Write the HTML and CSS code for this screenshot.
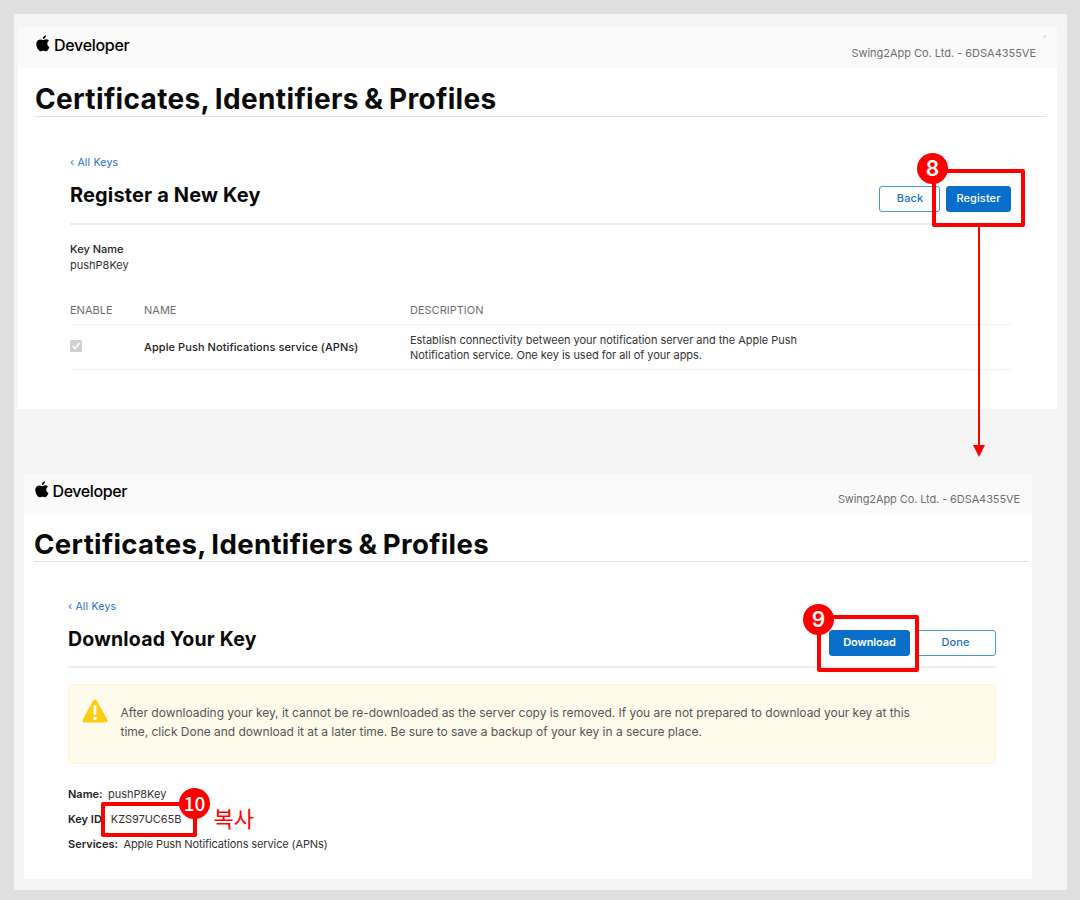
FILE: index.html
```html
<!DOCTYPE html>
<html lang="ko">
<head>
<meta charset="utf-8">
<title>Certificates, Identifiers &amp; Profiles</title>
<link rel="stylesheet" href="styles.css">
</head>
<body>
<svg width="0" height="0" class="defs"><symbol id="apple" viewBox="0 0 14 17"><path d="M9.9 0.2C10 1.3 9.6 2.3 8.9 3.1 8.3 3.8 7.5 4.2 6.8 4.1 6.7 3.1 7.1 2.2 7.7 1.5 8.3.8 9.2.3 9.9.2ZM12.9 5.7C11.8 6.4 11.3 7.4 11.3 8.7 11.3 10.3 12.2 11.4 13.4 11.9 13 13.3 12.3 14.5 11.4 15.5 10.8 16.2 10.2 16.4 9.5 16.2L8.1 15.8C7.4 15.6 6.8 15.7 6.1 15.9L5 16.2C4.1 16.5 3.4 16 2.8 15.3.9 13.2.2 10.800.3 8.700.4 6.300 1.800 4.500 4 4.400 5.200 4.300 6.100 5.100 7 5.100 7.900 5.100 8.900 4.300 10.200 4.300 11.300 4.300 12.300 4.900 12.900 5.700Z"/></symbol></svg>
<main class="canvas">
  <section class="panel panel-register">
    <header class="bar">
      <div class="brand"><svg class="apple"><use href="#apple"/></svg><span>Developer</span></div>
      <span class="team">Swing2App Co. Ltd. - 6DSA4355VE</span>
    </header>
    <h1 class="title">Certificates, Identifiers &amp; Profiles</h1>
    <div class="content">
      <a class="back-link">‹ All Keys</a>
      <div class="toolbar">
        <h2>Register a New Key</h2>
        <div class="actions"><span class="btn btn-back">Back</span><span class="btn primary btn-register">Register</span></div>
      </div>
      <div class="keyname"><b>Key Name</b><span>pushP8Key</span></div>
      <div class="grid grid-head"><span>ENABLE</span><span>NAME</span><span>DESCRIPTION</span></div>
      <div class="grid grid-row">
        <svg class="check" viewBox="0 0 12 12"><rect width="12" height="12" rx="1.500" fill="#d0d0d0"/><path d="M2.600 6.300 4.900 8.700 9.500 2.900" fill="none" stroke="#fff" stroke-width="1.600"/></svg>
        <span class="service">Apple Push Notifications service (APNs)</span>
        <span class="desc">Establish connectivity between your notification server and the Apple Push<br>Notification service. One key is used for all of your apps.</span>
      </div>
    </div>
  </section>

  <section class="panel panel-download">
    <header class="bar">
      <div class="brand"><svg class="apple"><use href="#apple"/></svg><span>Developer</span></div>
      <span class="team">Swing2App Co. Ltd. - 6DSA4355VE</span>
    </header>
    <h1 class="title">Certificates, Identifiers &amp; Profiles</h1>
    <div class="content">
      <a class="back-link">‹ All Keys</a>
      <div class="toolbar">
        <h2>Download Your Key</h2>
        <div class="actions"><span class="btn primary btn-download">Download</span><span class="btn btn-done">Done</span></div>
      </div>
      <div class="alert">
        <svg class="warn" viewBox="0 0 26 24"><path d="M13 2.500 23.500 21.500H2.500Z" fill="#ffcc14" stroke="#ffcc14" stroke-width="4" stroke-linejoin="round"/><path d="M13 7.500v7" stroke="#fff" stroke-width="2.800" stroke-linecap="round"/><circle cx="13" cy="19.500" r="1.700" fill="#fff"/></svg>
        <p>After downloading your key, it cannot be re-downloaded as the server copy is removed. If you are not prepared to download your key at this<br>time, click Done and download it at a later time. Be sure to save a backup of your key in a secure place.</p>
      </div>
      <dl class="facts">
        <div><dt>Name:</dt><dd>pushP8Key</dd></div>
        <div><dt>Key ID:</dt><dd>KZS97UC65B</dd></div>
        <div><dt>Services:</dt><dd class="services">Apple Push Notifications service (APNs)</dd></div>
      </dl>
    </div>
  </section>
</main>

<i class="speck"></i>
<div class="frame frame-8"></div><div class="step step-8">8</div>
<svg class="arrow" viewBox="0 0 12 230"><path d="M6 0V220" stroke="#f00" stroke-width="2"/><path d="M0 218H12L6 230Z" fill="#f00"/></svg>
<div class="frame frame-9"></div><div class="step step-9">9</div>
<div class="frame frame-10"></div><div class="step step-10">10</div>
<div class="copy-note">복사</div>
</body>
</html>
```
FILE: styles.css
```css
* { box-sizing: border-box; }
body { margin: 0; width: 1080px; height: 900px; position: relative; overflow: hidden; background: #e0e0e0; padding: 14px 13px 10px 14px; font-family: Inter, "Noto Sans CJK KR", sans-serif; color: #333; font-size: 11px; }
.defs { position: absolute; }
.canvas { height: 876px; background: #f5f5f5; padding-top: 13px; }
.panel { background: #fff; }
.panel-register { width: 1039px; height: 382px; margin-left: 4px; }
.panel-download { width: 1008px; height: 405px; margin: 65px 0 0 10px; }
.bar { height: 41px; background: #fafafa; display: flex; justify-content: space-between; padding: 8px 21px 0 18px; }
.panel-download .bar { height: 39px; padding: 7px 12px 0 11px; }
.brand { display: flex; gap: 4px; height: 20px; color: #000; font-size: 16px; line-height: 20px; font-weight: 500; letter-spacing: -0.3px; }
.panel-download .brand { letter-spacing: -0.4px; gap: 3.500px; }
.apple { width: 14px; height: 17px; }
.team { font-size: 11px; line-height: 14px; margin-top: 11px; color: #6e6e6e; letter-spacing: -0.020px; }
.panel-download .team { letter-spacing: -0.100px; }
.title { margin: 0 11px 0 17px; height: 49px; border-bottom: 1px solid #e2e2e2; font-size: 28px; line-height: 34px; padding-top: 14px; font-weight: 700; color: #0a0a0a; letter-spacing: 0.340px; word-spacing: -1.500px; white-space: nowrap; }
.panel-download .title { margin: 0 3px 0 10px; font-size: 27.600px; }
.content { padding: 38px 45px 0 52px; }
.panel-download .content { padding: 37px 36px 0 44px; }
.back-link { display: block; height: 16px; line-height: 16px; color: #1b70cb; font-size: 10.500px; letter-spacing: 0.200px; }
.toolbar { height: 54px; display: flex; justify-content: space-between; border-bottom: 2px solid #ececec; padding-top: 11px; }
.panel-download .toolbar { height: 53px; }
h2 { margin: 0; font-size: 20px; line-height: 27px; font-weight: 700; color: #0a0a0a; letter-spacing: 0.140px; white-space: nowrap; }
.panel-download h2 { font-size: 19.500px; letter-spacing: 0.200px; }
.actions { display: flex; padding-top: 4px; }
.btn { height: 26px; border: 1px solid #4a94dc; border-radius: 3px; font-size: 11px; line-height: 23px; font-weight: 500; text-align: center; color: #1b70cb; letter-spacing: 0.100px; }
.primary { background: #0a6fcb; border-color: #0a6fcb; color: #fff; }
.btn-back { width: 61px; margin-right: 6px; padding-left: 1px; }
.btn-register { width: 65px; margin-right: 1px; }
.btn-download { width: 81px; margin-right: 5px; font-weight: 600; letter-spacing: -0.100px; }
.btn-done { width: 81px; }
.keyname { margin-top: 16px; display: flex; flex-direction: column; line-height: 16px; }
.keyname b { font-weight: 500; color: #222; }
.grid { display: grid; grid-template-columns: 74px 266px 1fr; }
.grid-head { height: 23px; margin-top: 29px; border-bottom: 1px solid #f2f2f2; line-height: 17px; color: #6e6e6e; }
.grid-row { height: 45px; border-bottom: 1px solid #f2f2f2; line-height: 16px; }
.check { width: 12px; height: 12px; margin: 15px 0 0 -0.500px; }
.service { margin-top: 14px; font-weight: 500; color: #222; letter-spacing: 0.080px; }
.desc { margin-top: 8px; white-space: nowrap; line-height: 15px; letter-spacing: -0.033px; }
.alert { margin-top: 16px; height: 80px; background: #fffbeb; border: 1px solid #fff3d2; border-radius: 3px; display: flex; padding: 14px 0 0 13px; }
.warn { width: 26px; height: 24px; }
.alert p { margin: 4px 0 0 12.500px; font-size: 12px; line-height: 19px; color: #555; white-space: nowrap; letter-spacing: -0.025px; }
.facts { margin: 18px 0 0; }
.facts div { display: flex; height: 25px; line-height: 25px; gap: 5.500px; }
dt { font-weight: 600; color: #222; }
dd { margin: 0; letter-spacing: -0.060px; }
.services { letter-spacing: -0.120px; }
.speck { position: absolute; left: 1043px; top: 36px; width: 3px; height: 1px; background: #a9c9ef; transform: rotate(-40deg); }
.frame { position: absolute; border: 4px solid #f00; border-radius: 2px; }
.frame-8 { left: 932px; top: 169px; width: 93px; height: 58px; }
.frame-9 { left: 817px; top: 615px; width: 102px; height: 57px; }
.frame-10 { left: 101px; top: 802px; width: 96px; height: 35px; }
.step { position: absolute; width: 31px; height: 31px; border-radius: 50%; background: #f00; color: #fff; font: 600 21px/31px Inter, sans-serif; text-align: center; }
.step-8 { left: 917px; top: 153px; }
.step-9 { left: 803px; top: 604px; }
.step-10 { left: 179px; top: 788px; font-size: 19px; font-weight: 500; font-family: "Noto Sans CJK KR", sans-serif; line-height: 30px; }
.arrow { position: absolute; left: 972.500px; top: 227px; width: 12px; height: 230px; }
.copy-note { position: absolute; left: 213.500px; top: 803px; font: 400 22px/28px "Noto Sans CJK KR", sans-serif; color: #f00; }
```
